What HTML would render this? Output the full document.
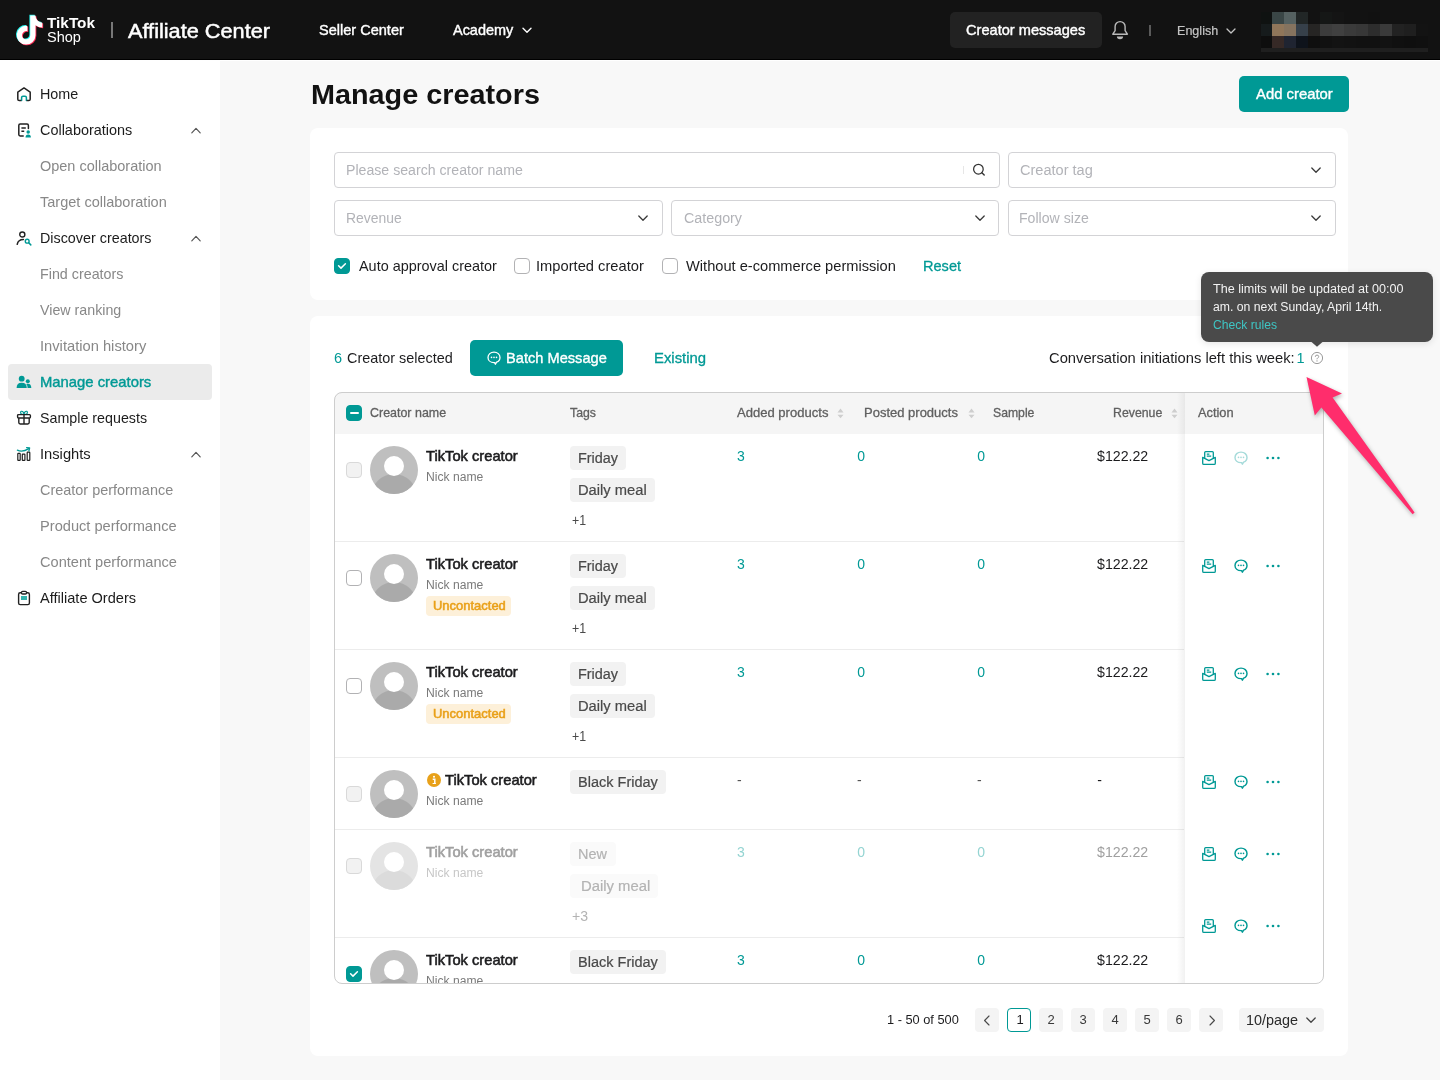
<!DOCTYPE html>
<html lang="en">
<head>
<meta charset="utf-8">
<title>Manage creators</title>
<style>
*{box-sizing:border-box;margin:0;padding:0}
html,body{width:1440px;height:1080px;overflow:hidden}
body{font-family:"Liberation Sans",sans-serif;background:#f8f8f8;color:#161823;position:relative;font-size:14px}
#app{position:absolute;left:0;top:0;width:1440px;height:1080px;overflow:hidden;will-change:transform;background:#f8f8f8}
.a{position:absolute}
.t{position:absolute;white-space:nowrap;line-height:1}
svg{position:absolute;overflow:visible}
#top{position:absolute;left:0;top:0;width:1440px;height:60px;background:#121212;border-bottom:1px solid #000}
#wl{position:absolute;left:0;top:60px;width:1440px;height:1px;background:#fff}
#side{position:absolute;left:0;top:60px;width:220px;height:1020px;background:#fff}
.card{position:absolute;background:#fff;border-radius:8px}
.inp{position:absolute;height:36px;border:1px solid #d3d3d6;border-radius:4px;background:#fff}
.cb{position:absolute;width:16px;height:16px;border:1px solid #b2b2b4;border-radius:4px;background:#fff}
.cb.on{background:#009995;border-color:#009995}
.cb.dis{background:#f2f2f2;border-color:#d9d9d9}
.tag{position:absolute;height:24px;background:#f2f2f2;border-radius:4px}
.av{position:absolute;width:48px;height:48px;border-radius:50%;background:#bfbfbf;overflow:hidden}
.av i{position:absolute;left:13.8px;top:9.5px;width:20.4px;height:20.4px;border-radius:50%;background:#fff}
.av b{position:absolute;left:0.7px;top:28px;width:46.6px;height:46.6px;border-radius:50%;background:#aaa}
.pg{position:absolute;top:1008px;width:24px;height:24px;border-radius:4px;background:#f4f4f4}
.sep{position:absolute;left:335px;width:849px;height:1px;background:#ebebeb}
</style>
</head>
<body>
<div id="app">
<div id="top"></div><div id="wl"></div>
<svg class="a" style="left:0;top:0" width="60" height="59" viewBox="0 0 60 59"><g transform="translate(29.55,29.85) scale(0.935) translate(-29.55,-29.85)"><path d="M35.9,14.4H30.30V35.6a4.4,4.4 0 1 1 -3.10,-4.20v-5.71a10.0,10.0 0 1 0 8.70,9.92V25a12.5,12.5 0 0 0 7.3,2.4v-5.2a7.3,7.8 0 0 1 -7.3,-7.8z" fill="#25f4ee" transform="translate(-0.9,-0.8)"/><path d="M35.9,14.4H30.30V35.6a4.4,4.4 0 1 1 -3.10,-4.20v-5.71a10.0,10.0 0 1 0 8.70,9.92V25a12.5,12.5 0 0 0 7.3,2.4v-5.2a7.3,7.8 0 0 1 -7.3,-7.8z" fill="#fe2c55" transform="translate(0.9,0.8)"/><path d="M35.9,14.4H30.30V35.6a4.4,4.4 0 1 1 -3.10,-4.20v-5.71a10.0,10.0 0 1 0 8.70,9.92V25a12.5,12.5 0 0 0 7.3,2.4v-5.2a7.3,7.8 0 0 1 -7.3,-7.8z" fill="#fff"/></g></svg>
<span class="t" style="left:46.80px;top:15px;font-size:14.5px;color:#fff;line-height:16px;font-weight:700;transform:scaleX(1.0577);transform-origin:0 0;">TikTok</span>
<span class="t" style="left:46.80px;top:29px;font-size:14.3px;color:#fff;line-height:16px;transform:scaleX(1.0168);transform-origin:0 0;">Shop</span>
<div class="a" style="left:111.3px;top:22px;width:1.6px;height:15.5px;background:#777"></div>
<span class="t" style="left:128.20px;top:19px;font-size:21px;color:#fff;line-height:23px;transform:scaleX(1.0338);transform-origin:0 0;-webkit-text-stroke:0.5px #fff;">Affiliate Center</span>
<span class="t" style="left:319.20px;top:22px;font-size:14.5px;color:#fff;line-height:16px;transform:scaleX(1.0024);transform-origin:0 0;-webkit-text-stroke:0.4px #fff;">Seller Center</span>
<span class="t" style="left:453.00px;top:22px;font-size:14.5px;color:#fff;line-height:16px;transform:scaleX(0.9969);transform-origin:0 0;-webkit-text-stroke:0.4px #fff;">Academy</span>
<svg style="left:522px;top:27px" width="10" height="7" viewBox="0 0 10 7"><path d="M1,1.2 L5,5.2 L9,1.2" fill="none" stroke="#fff" stroke-width="1.4" stroke-linecap="round" stroke-linejoin="round"/></svg>
<div class="a" style="left:950px;top:12px;width:152px;height:36px;border-radius:5px;background:#222"></div>
<span class="t" style="left:966.20px;top:22px;font-size:14.5px;color:#fff;line-height:16px;transform:scaleX(1.0067);transform-origin:0 0;-webkit-text-stroke:0.4px #fff;">Creator messages</span>
<svg style="left:1111px;top:21px" width="18" height="19" viewBox="0 0 18 19"><path d="M4.1,5.6 A5,5 0 0 1 14.1,5.6 V9.6 L16.4,13.2 H1.8 L4.1,9.6 Z" fill="none" stroke="#b9b9b9" stroke-width="1.4" stroke-linejoin="round"/><path d="M5.9,15.5 H12.1 A3.1,2.8 0 0 1 5.9,15.5 Z" fill="#b9b9b9"/></svg>
<div class="a" style="left:1149.3px;top:25px;width:1.5px;height:10.5px;background:#5a5a5a"></div>
<span class="t" style="left:1177.43px;top:23px;font-size:13px;color:#c4c4c4;line-height:15px;transform:scaleX(0.9660);transform-origin:0 0;-webkit-text-stroke:0.2px #c4c4c4;">English</span>
<svg style="left:1226px;top:27.5px" width="10" height="7" viewBox="0 0 10 7"><path d="M1,1 L5,5 L9,1" fill="none" stroke="#c4c4c4" stroke-width="1.3" stroke-linecap="round" stroke-linejoin="round"/></svg>
<div class="a" style="left:1261px;top:12px;width:11px;height:12px;background:#0f1211"></div><div class="a" style="left:1272px;top:12px;width:12px;height:12px;background:#3a4646"></div><div class="a" style="left:1284px;top:12px;width:12px;height:12px;background:#556161"></div><div class="a" style="left:1296px;top:12px;width:12px;height:12px;background:#212626"></div><div class="a" style="left:1308px;top:12px;width:12px;height:12px;background:#121212"></div><div class="a" style="left:1320px;top:12px;width:12px;height:12px;background:#151716"></div><div class="a" style="left:1332px;top:12px;width:12px;height:12px;background:#141414"></div><div class="a" style="left:1344px;top:12px;width:12px;height:12px;background:#121212"></div><div class="a" style="left:1356px;top:12px;width:12px;height:12px;background:#121212"></div><div class="a" style="left:1368px;top:12px;width:12px;height:12px;background:#111111"></div><div class="a" style="left:1380px;top:12px;width:12px;height:12px;background:#121212"></div><div class="a" style="left:1392px;top:12px;width:12px;height:12px;background:#121212"></div><div class="a" style="left:1404px;top:12px;width:12px;height:12px;background:#121212"></div><div class="a" style="left:1416px;top:12px;width:12px;height:12px;background:#121212"></div><div class="a" style="left:1261px;top:24px;width:11px;height:12px;background:#161b1c"></div><div class="a" style="left:1272px;top:24px;width:12px;height:12px;background:#90765a"></div><div class="a" style="left:1284px;top:24px;width:12px;height:12px;background:#85735f"></div><div class="a" style="left:1296px;top:24px;width:12px;height:12px;background:#36404a"></div><div class="a" style="left:1308px;top:24px;width:12px;height:12px;background:#262524"></div><div class="a" style="left:1320px;top:24px;width:12px;height:12px;background:#3c3c3c"></div><div class="a" style="left:1332px;top:24px;width:12px;height:12px;background:#404040"></div><div class="a" style="left:1344px;top:24px;width:12px;height:12px;background:#3a3a3a"></div><div class="a" style="left:1356px;top:24px;width:12px;height:12px;background:#373737"></div><div class="a" style="left:1368px;top:24px;width:12px;height:12px;background:#2d2d2d"></div><div class="a" style="left:1380px;top:24px;width:12px;height:12px;background:#3a3a3a"></div><div class="a" style="left:1392px;top:24px;width:12px;height:12px;background:#222222"></div><div class="a" style="left:1404px;top:24px;width:12px;height:12px;background:#1f1f1f"></div><div class="a" style="left:1416px;top:24px;width:12px;height:12px;background:#131313"></div><div class="a" style="left:1261px;top:36px;width:11px;height:12px;background:#0e0e0e"></div><div class="a" style="left:1272px;top:36px;width:12px;height:12px;background:#362926"></div><div class="a" style="left:1284px;top:36px;width:12px;height:12px;background:#1f2431"></div><div class="a" style="left:1296px;top:36px;width:12px;height:12px;background:#0e131b"></div><div class="a" style="left:1308px;top:36px;width:12px;height:12px;background:#0f0f0f"></div><div class="a" style="left:1320px;top:36px;width:12px;height:12px;background:#111111"></div><div class="a" style="left:1332px;top:36px;width:12px;height:12px;background:#131313"></div><div class="a" style="left:1344px;top:36px;width:12px;height:12px;background:#121212"></div><div class="a" style="left:1356px;top:36px;width:12px;height:12px;background:#111111"></div><div class="a" style="left:1368px;top:36px;width:12px;height:12px;background:#111111"></div><div class="a" style="left:1380px;top:36px;width:12px;height:12px;background:#121212"></div><div class="a" style="left:1392px;top:36px;width:12px;height:12px;background:#101010"></div><div class="a" style="left:1404px;top:36px;width:12px;height:12px;background:#0f0f0f"></div><div class="a" style="left:1416px;top:36px;width:12px;height:12px;background:#101010"></div><div class="a" style="left:1261px;top:48px;width:167px;height:4px;background:#1f1f1f"></div>
<div id="side"></div>
<div class="a" style="left:8px;top:364px;width:204px;height:36px;border-radius:4px;background:#ebebeb"></div>
<span class="t" style="left:39.50px;top:86px;font-size:14.5px;color:#1c1c1c;line-height:16px;transform:scaleX(0.9890);transform-origin:0 0;">Home</span>
<span class="t" style="left:39.50px;top:122px;font-size:14.5px;color:#1c1c1c;line-height:16px;transform:scaleX(0.9952);transform-origin:0 0;">Collaborations</span>
<span class="t" style="left:39.50px;top:158px;font-size:14.5px;color:#888888;line-height:16px;transform:scaleX(0.9987);transform-origin:0 0;">Open collaboration</span>
<span class="t" style="left:39.50px;top:194px;font-size:14.5px;color:#888888;line-height:16px;transform:scaleX(1.0017);transform-origin:0 0;">Target collaboration</span>
<span class="t" style="left:39.50px;top:230px;font-size:14.5px;color:#1c1c1c;line-height:16px;transform:scaleX(0.9887);transform-origin:0 0;">Discover creators</span>
<span class="t" style="left:39.50px;top:266px;font-size:14.5px;color:#888888;line-height:16px;transform:scaleX(0.9860);transform-origin:0 0;">Find creators</span>
<span class="t" style="left:39.50px;top:302px;font-size:14.5px;color:#888888;line-height:16px;transform:scaleX(0.9820);transform-origin:0 0;">View ranking</span>
<span class="t" style="left:39.50px;top:338px;font-size:14.5px;color:#888888;line-height:16px;transform:scaleX(1.0142);transform-origin:0 0;">Invitation history</span>
<span class="t" style="left:39.50px;top:374px;font-size:14.5px;color:#009995;line-height:16px;transform:scaleX(1.0227);transform-origin:0 0;-webkit-text-stroke:0.4px #009995;">Manage creators</span>
<span class="t" style="left:39.50px;top:410px;font-size:14.5px;color:#1c1c1c;line-height:16px;transform:scaleX(0.9838);transform-origin:0 0;">Sample requests</span>
<span class="t" style="left:39.50px;top:446px;font-size:14.5px;color:#1c1c1c;line-height:16px;transform:scaleX(1.0139);transform-origin:0 0;">Insights</span>
<span class="t" style="left:39.50px;top:482px;font-size:14.5px;color:#888888;line-height:16px;transform:scaleX(0.9954);transform-origin:0 0;">Creator performance</span>
<span class="t" style="left:39.50px;top:518px;font-size:14.5px;color:#888888;line-height:16px;transform:scaleX(1.0087);transform-origin:0 0;">Product performance</span>
<span class="t" style="left:39.50px;top:554px;font-size:14.5px;color:#888888;line-height:16px;transform:scaleX(1.0055);transform-origin:0 0;">Content performance</span>
<span class="t" style="left:39.50px;top:590px;font-size:14.5px;color:#1c1c1c;line-height:16px;transform:scaleX(1.0044);transform-origin:0 0;">Affiliate Orders</span>
<svg style="left:191px;top:127.19999999999999px" width="10" height="7" viewBox="0 0 10 7"><path d="M0.8,5.8 L5,1.4 L9.2,5.8" fill="none" stroke="#555" stroke-width="1.2" stroke-linecap="round" stroke-linejoin="round"/></svg>
<svg style="left:191px;top:235.2px" width="10" height="7" viewBox="0 0 10 7"><path d="M0.8,5.8 L5,1.4 L9.2,5.8" fill="none" stroke="#555" stroke-width="1.2" stroke-linecap="round" stroke-linejoin="round"/></svg>
<svg style="left:191px;top:451.2px" width="10" height="7" viewBox="0 0 10 7"><path d="M0.8,5.8 L5,1.4 L9.2,5.8" fill="none" stroke="#555" stroke-width="1.2" stroke-linecap="round" stroke-linejoin="round"/></svg>
<svg style="left:16px;top:86px" width="16" height="16" viewBox="0 0 16 16"><path d="M5.4,14.6 H3.2 Q1.8,14.6 1.8,13.2 V6.2 L8,1.9 L14.2,6.2 V13.2 Q14.2,14.6 12.8,14.6 H10.6" fill="none" stroke="#222" stroke-width="1.5" stroke-linejoin="round" stroke-linecap="round"/><path d="M5.6,14.8 V11.6 Q5.6,10.2 7,10.2 H9 Q10.4,10.2 10.4,11.6 V14.8" fill="none" stroke="#009995" stroke-width="1.5"/></svg>
<svg style="left:16px;top:122px" width="16" height="16" viewBox="0 0 16 16"><path d="M7.2,14 H4.2 Q2.8,14 2.8,12.6 V3.4 Q2.8,2 4.2,2 H11 Q12.4,2 12.4,3.4 V6.6" fill="none" stroke="#222" stroke-width="1.5" stroke-linecap="round"/><path d="M5.4,6 H9.8 M5.4,9.2 H8.2" stroke="#222" stroke-width="1.5"/><circle cx="12.2" cy="9.9" r="1.75" fill="#009995"/><path d="M9.5,15.4 Q9.5,12.4 12.2,12.4 Q14.9,12.4 14.9,15.4 Z" fill="#009995"/></svg>
<svg style="left:16px;top:230px" width="16" height="16" viewBox="0 0 16 16"><circle cx="6.3" cy="4.5" r="2.55" fill="none" stroke="#222" stroke-width="1.4"/><path d="M1.2,14.3 Q2.2,9.7 7.4,9.6" fill="none" stroke="#222" stroke-width="1.5" stroke-linecap="round"/><circle cx="11.2" cy="11.2" r="1.9" fill="none" stroke="#009995" stroke-width="1.4"/><path d="M12.7,12.8 L14.8,14.9" stroke="#009995" stroke-width="1.5" stroke-linecap="round"/></svg>
<svg style="left:16px;top:374px" width="16" height="16" viewBox="0 0 16 16"><circle cx="5.7" cy="4.7" r="2.9" fill="#009995"/><path d="M0.6,14 Q0.6,8.8 5.7,8.8 Q10.8,8.8 10.8,14 Z" fill="#009995"/><circle cx="11.8" cy="7.2" r="2" fill="#009995"/><path d="M11.6,14 Q11.6,11.2 10.2,10 Q10.9,9.7 11.8,9.7 Q15.3,9.7 15.3,14 Z" fill="#009995"/></svg>
<svg style="left:16px;top:410px" width="16" height="16" viewBox="0 0 16 16"><path d="M8,4.3 Q4.4,4.6 4.6,2.4 Q4.9,0.6 6.6,1.6 Q7.8,2.4 8,4.3 Q8.2,2.4 9.4,1.6 Q11.1,0.6 11.4,2.4 Q11.6,4.6 8,4.3" fill="none" stroke="#009995" stroke-width="1.2"/><rect x="1.6" y="4.6" width="12.8" height="3.4" rx="0.9" fill="none" stroke="#222" stroke-width="1.4"/><path d="M2.8,8 V12.6 Q2.8,14 4.2,14 H11.8 Q13.2,14 13.2,12.6 V8 M8,4.8 V14" fill="none" stroke="#222" stroke-width="1.4"/></svg>
<svg style="left:16px;top:446px" width="16" height="16" viewBox="0 0 16 16"><rect x="1.8" y="7.4" width="2.4" height="7" rx="0.5" fill="none" stroke="#222" stroke-width="1.2"/><rect x="6.3" y="8.2" width="2.6" height="6.2" rx="0.5" fill="none" stroke="#222" stroke-width="1.2"/><rect x="11.2" y="6.2" width="2.6" height="8.2" rx="0.5" fill="none" stroke="#222" stroke-width="1.2"/><path d="M1.4,4.2 Q6.5,6.6 12.8,2.6" fill="none" stroke="#009995" stroke-width="1.3" stroke-linecap="round"/><path d="M10.6,1.6 L13.6,2 L12.9,4.9" fill="none" stroke="#009995" stroke-width="1.3" stroke-linecap="round" stroke-linejoin="round"/></svg>
<svg style="left:16px;top:590px" width="16" height="16" viewBox="0 0 16 16"><rect x="2.6" y="2.8" width="10.8" height="11.8" rx="1.6" fill="none" stroke="#222" stroke-width="1.4"/><rect x="5.4" y="1.4" width="5.2" height="2.6" rx="1.3" fill="#fff" stroke="#222" stroke-width="1.3"/><rect x="5" y="6" width="6" height="4" fill="#33b3ad"/></svg>
<span class="t" style="left:310.96px;top:79px;font-size:27.6px;color:#121212;line-height:31px;font-weight:700;transform:scaleX(1.0438);transform-origin:0 0;">Manage creators</span>
<div class="a" style="left:1239px;top:76px;width:110px;height:36px;border-radius:5px;background:#009995"></div>
<span class="t" style="left:1255.50px;top:86px;font-size:14.5px;color:#fff;line-height:16px;transform:scaleX(1.0249);transform-origin:0 0;-webkit-text-stroke:0.35px #fff;">Add creator</span>
<div class="card" style="left:310.4px;top:127.8px;width:1038.1px;height:172.4px"></div>
<div class="inp" style="left:334px;top:152px;width:665.6px"></div>
<span class="t" style="left:345.69px;top:162px;font-size:14px;color:#b2b3b8;line-height:16px;transform:scaleX(1.0097);transform-origin:0 0;">Please search creator name</span>
<div class="a" style="left:963px;top:166px;width:1px;height:8px;background:#e6e6e6"></div>
<svg style="left:972px;top:163px" width="14" height="14" viewBox="0 0 14 14"><circle cx="6.4" cy="6.2" r="4.8" fill="none" stroke="#333" stroke-width="1.25"/><path d="M9.9,9.7 L12.2,12" stroke="#333" stroke-width="1.35" stroke-linecap="round"/></svg>
<div class="inp" style="left:1008px;top:152px;width:328px"></div>
<span class="t" style="left:1020.00px;top:162px;font-size:14px;color:#b2b3b8;line-height:16px;transform:scaleX(1.0397);transform-origin:0 0;">Creator tag</span>
<svg style="left:1311.2px;top:166.5px" width="10" height="7" viewBox="0 0 10 7"><path d="M0.8,1 L5,5.2 L9.2,1" fill="none" stroke="#3a3a3a" stroke-width="1.3" stroke-linecap="round" stroke-linejoin="round"/></svg>
<div class="inp" style="left:334px;top:200px;width:329px"></div>
<span class="t" style="left:345.70px;top:210px;font-size:14px;color:#b2b3b8;line-height:16px;transform:scaleX(0.9954);transform-origin:0 0;">Revenue</span>
<svg style="left:638px;top:214.5px" width="10" height="7" viewBox="0 0 10 7"><path d="M0.8,1 L5,5.2 L9.2,1" fill="none" stroke="#3a3a3a" stroke-width="1.3" stroke-linecap="round" stroke-linejoin="round"/></svg>
<div class="inp" style="left:671px;top:200px;width:328px"></div>
<span class="t" style="left:683.70px;top:210px;font-size:14px;color:#b2b3b8;line-height:16px;transform:scaleX(1.0210);transform-origin:0 0;">Category</span>
<svg style="left:975px;top:214.5px" width="10" height="7" viewBox="0 0 10 7"><path d="M0.8,1 L5,5.2 L9.2,1" fill="none" stroke="#3a3a3a" stroke-width="1.3" stroke-linecap="round" stroke-linejoin="round"/></svg>
<div class="inp" style="left:1008px;top:200px;width:328px"></div>
<span class="t" style="left:1018.99px;top:210px;font-size:14px;color:#b2b3b8;line-height:16px;transform:scaleX(1.0080);transform-origin:0 0;">Follow size</span>
<svg style="left:1311.2px;top:214.5px" width="10" height="7" viewBox="0 0 10 7"><path d="M0.8,1 L5,5.2 L9.2,1" fill="none" stroke="#3a3a3a" stroke-width="1.3" stroke-linecap="round" stroke-linejoin="round"/></svg>
<div class="cb on" style="left:334px;top:258px"><svg style="left:2px;top:3px" width="10" height="8" viewBox="0 0 10 8"><path d="M1.6,3.8 L4,6.1 L8.4,1.7" fill="none" stroke="#fff" stroke-width="1.5" stroke-linecap="round" stroke-linejoin="round"/></svg></div>
<span class="t" style="left:358.70px;top:258px;font-size:14.5px;color:#1c1c1e;line-height:16px;transform:scaleX(0.9942);transform-origin:0 0;">Auto approval creator</span>
<div class="cb" style="left:514px;top:258px"></div>
<span class="t" style="left:536.49px;top:258px;font-size:14.5px;color:#1c1c1e;line-height:16px;transform:scaleX(1.0137);transform-origin:0 0;">Imported creator</span>
<div class="cb" style="left:662px;top:258px"></div>
<span class="t" style="left:685.70px;top:258px;font-size:14.5px;color:#1c1c1e;line-height:16px;transform:scaleX(1.0095);transform-origin:0 0;">Without e-commerce permission</span>
<span class="t" style="left:922.70px;top:258px;font-size:14.5px;color:#009995;line-height:16px;transform:scaleX(1.0041);transform-origin:0 0;-webkit-text-stroke:0.3px #009995;">Reset</span>
<div class="card" style="left:310.4px;top:315.8px;width:1038.1px;height:739.9px"></div>
<span class="t" style="left:334.00px;top:350px;font-size:14.5px;color:#009995;line-height:16px;">6</span>
<span class="t" style="left:347.10px;top:350px;font-size:14.5px;color:#1c1c1e;line-height:16px;transform:scaleX(0.9932);transform-origin:0 0;">Creator selected</span>
<div class="a" style="left:470px;top:340px;width:153px;height:36px;border-radius:5px;background:#009995"></div>
<svg style="left:487px;top:351px;opacity:1" width="14" height="14" viewBox="0 0 14 14"><path d="M7,1.1 C3.6,1.1 1,3.4 1,6.4 C1,9.4 3.6,11.6 7,11.6 L7.6,11.6 L8.4,13.2 L9.6,11.2 C11.6,10.4 13,8.6 13,6.4 C13,3.4 10.4,1.1 7,1.1 Z" fill="none" stroke="#fff" stroke-width="1.3" stroke-linejoin="round"/><circle cx="4.5" cy="6.4" r="0.8" fill="#fff"/><circle cx="7" cy="6.4" r="0.8" fill="#fff"/><circle cx="9.5" cy="6.4" r="0.8" fill="#fff"/></svg>
<span class="t" style="left:505.59px;top:350px;font-size:14.5px;color:#fff;line-height:16px;transform:scaleX(1.0083);transform-origin:0 0;-webkit-text-stroke:0.35px #fff;">Batch Message</span>
<span class="t" style="left:654.27px;top:350px;font-size:14.5px;color:#009995;line-height:16px;transform:scaleX(1.0260);transform-origin:0 0;-webkit-text-stroke:0.3px #009995;">Existing</span>
<span class="t" style="left:1048.60px;top:350px;font-size:14.5px;color:#1c1c1e;line-height:16px;transform:scaleX(1.0160);transform-origin:0 0;">Conversation initiations left this week:</span>
<span class="t" style="left:1296.40px;top:350px;font-size:14.5px;color:#009995;line-height:16px;">1</span>
<svg style="left:1310px;top:351px" width="14" height="14" viewBox="0 0 14 14"><circle cx="7" cy="7" r="5.6" fill="none" stroke="#9a9a9a" stroke-width="1"/><path d="M5.3,5.8 Q5.3,4.1 7,4.1 Q8.7,4.1 8.7,5.6 Q8.7,6.6 7.6,7.1 Q7,7.4 7,8.3" fill="none" stroke="#9a9a9a" stroke-width="1"/><circle cx="7" cy="9.9" r="0.65" fill="#9a9a9a"/></svg>
<div class="a" style="left:334px;top:392px;width:990px;height:592px;border-radius:8px;overflow:hidden;background:#fff">
<div class="a" style="left:0;top:0;width:990px;height:42px;background:#f5f5f5"></div>
<div class="cb on" style="left:12px;top:13px"><div class="a" style="left:2.5px;top:6px;width:9px;height:2px;border-radius:1px;background:#fff"></div></div>
<span class="t" style="left:36.20px;top:13px;font-size:12.8px;color:#606060;line-height:15px;transform:scaleX(0.9729);transform-origin:0 0;-webkit-text-stroke:0.3px #606060;">Creator name</span>
<span class="t" style="left:236.20px;top:13px;font-size:12.8px;color:#606060;line-height:15px;transform:scaleX(0.9612);transform-origin:0 0;-webkit-text-stroke:0.3px #606060;">Tags</span>
<span class="t" style="left:403.00px;top:13px;font-size:12.8px;color:#606060;line-height:15px;transform:scaleX(1.0197);transform-origin:0 0;-webkit-text-stroke:0.3px #606060;">Added products</span>
<span class="t" style="left:530.48px;top:13px;font-size:12.8px;color:#606060;line-height:15px;transform:scaleX(1.0156);transform-origin:0 0;-webkit-text-stroke:0.3px #606060;">Posted products</span>
<span class="t" style="left:659.20px;top:13px;font-size:12.8px;color:#606060;line-height:15px;transform:scaleX(0.9544);transform-origin:0 0;-webkit-text-stroke:0.3px #606060;">Sample</span>
<span class="t" style="left:778.54px;top:13px;font-size:12.8px;color:#606060;line-height:15px;transform:scaleX(0.9619);transform-origin:0 0;-webkit-text-stroke:0.3px #606060;">Revenue</span>
<svg style="left:502.6px;top:15.5px" width="7" height="12" viewBox="0 0 7 12"><path d="M3.5,0.6 L6.5,4.4 H0.5 Z M3.5,10.2 L6.5,6.7 H0.5 Z" fill="#cecece"/></svg>
<svg style="left:633.6px;top:15.5px" width="7" height="12" viewBox="0 0 7 12"><path d="M3.5,0.6 L6.5,4.4 H0.5 Z M3.5,10.2 L6.5,6.7 H0.5 Z" fill="#cecece"/></svg>
<svg style="left:836.5999999999999px;top:15.5px" width="7" height="12" viewBox="0 0 7 12"><path d="M3.5,0.6 L6.5,4.4 H0.5 Z M3.5,10.2 L6.5,6.7 H0.5 Z" fill="#cecece"/></svg>
<div class="a" style="left:0;top:149px;width:850px;height:1px;background:#ececec"></div>
<div class="cb dis" style="left:12px;top:70px"></div>
<div class="av" style="left:36px;top:54px;"><b></b><i></i></div>
<span class="t" style="left:92.30px;top:56px;font-size:14.2px;color:#1c1c1e;line-height:16px;transform:scaleX(1.0356);transform-origin:0 0;-webkit-text-stroke:0.55px #1c1c1e;">TikTok creator</span>
<span class="t" style="left:92.30px;top:78px;font-size:12px;color:#7a7a7a;line-height:14px;transform:scaleX(1.0104);transform-origin:0 0;">Nick name</span>
<div class="tag" style="left:236px;top:54px;width:56px;background:#f2f2f2"></div>
<span class="t" style="left:243.57px;top:58px;font-size:14px;color:#4a4a4a;line-height:16px;transform:scaleX(1.0291);transform-origin:0 0;-webkit-text-stroke:0.2px #4a4a4a;">Friday</span>
<div class="tag" style="left:236px;top:86px;width:85px;background:#f2f2f2"></div>
<span class="t" style="left:243.55px;top:90px;font-size:14px;color:#4a4a4a;line-height:16px;transform:scaleX(1.0507);transform-origin:0 0;-webkit-text-stroke:0.2px #4a4a4a;">Daily meal</span>
<span class="t" style="left:237.60px;top:120px;font-size:14px;color:#4a4a4a;line-height:16px;transform:scaleX(0.8840);transform-origin:0 0;">+1</span>
<span class="t" style="left:403.00px;top:56px;font-size:14px;color:#009995;line-height:16px;">3</span>
<span class="t" style="left:523.30px;top:56px;font-size:14px;color:#009995;line-height:16px;">0</span>
<span class="t" style="left:643.30px;top:56px;font-size:14px;color:#009995;line-height:16px;">0</span>
<span class="t" style="left:763.30px;top:56px;font-size:14.5px;color:#1c1c1e;line-height:16px;transform:scaleX(0.9780);transform-origin:0 0;">$122.22</span>
<div class="a" style="left:0;top:257px;width:850px;height:1px;background:#ececec"></div>
<div class="cb" style="left:12px;top:178px"></div>
<div class="av" style="left:36px;top:162px;"><b></b><i></i></div>
<span class="t" style="left:92.30px;top:164px;font-size:14.2px;color:#1c1c1e;line-height:16px;transform:scaleX(1.0356);transform-origin:0 0;-webkit-text-stroke:0.55px #1c1c1e;">TikTok creator</span>
<span class="t" style="left:92.30px;top:186px;font-size:12px;color:#7a7a7a;line-height:14px;transform:scaleX(1.0104);transform-origin:0 0;">Nick name</span>
<div class="a" style="left:92px;top:204px;width:85px;height:20px;border-radius:4px;background:#fdf0d9"></div>
<span class="t" style="left:98.50px;top:207px;font-size:12.2px;color:#e9a019;line-height:14px;transform:scaleX(1.0643);transform-origin:0 0;-webkit-text-stroke:0.5px #e9a019;">Uncontacted</span>
<div class="tag" style="left:236px;top:162px;width:56px;background:#f2f2f2"></div>
<span class="t" style="left:243.57px;top:166px;font-size:14px;color:#4a4a4a;line-height:16px;transform:scaleX(1.0291);transform-origin:0 0;-webkit-text-stroke:0.2px #4a4a4a;">Friday</span>
<div class="tag" style="left:236px;top:194px;width:85px;background:#f2f2f2"></div>
<span class="t" style="left:243.55px;top:198px;font-size:14px;color:#4a4a4a;line-height:16px;transform:scaleX(1.0507);transform-origin:0 0;-webkit-text-stroke:0.2px #4a4a4a;">Daily meal</span>
<span class="t" style="left:237.60px;top:228px;font-size:14px;color:#4a4a4a;line-height:16px;transform:scaleX(0.8840);transform-origin:0 0;">+1</span>
<span class="t" style="left:403.00px;top:164px;font-size:14px;color:#009995;line-height:16px;">3</span>
<span class="t" style="left:523.30px;top:164px;font-size:14px;color:#009995;line-height:16px;">0</span>
<span class="t" style="left:643.30px;top:164px;font-size:14px;color:#009995;line-height:16px;">0</span>
<span class="t" style="left:763.30px;top:164px;font-size:14.5px;color:#1c1c1e;line-height:16px;transform:scaleX(0.9780);transform-origin:0 0;">$122.22</span>
<div class="a" style="left:0;top:365px;width:850px;height:1px;background:#ececec"></div>
<div class="cb" style="left:12px;top:286px"></div>
<div class="av" style="left:36px;top:270px;"><b></b><i></i></div>
<span class="t" style="left:92.30px;top:272px;font-size:14.2px;color:#1c1c1e;line-height:16px;transform:scaleX(1.0356);transform-origin:0 0;-webkit-text-stroke:0.55px #1c1c1e;">TikTok creator</span>
<span class="t" style="left:92.30px;top:294px;font-size:12px;color:#7a7a7a;line-height:14px;transform:scaleX(1.0104);transform-origin:0 0;">Nick name</span>
<div class="a" style="left:92px;top:312px;width:85px;height:20px;border-radius:4px;background:#fdf0d9"></div>
<span class="t" style="left:98.50px;top:315px;font-size:12.2px;color:#e9a019;line-height:14px;transform:scaleX(1.0643);transform-origin:0 0;-webkit-text-stroke:0.5px #e9a019;">Uncontacted</span>
<div class="tag" style="left:236px;top:270px;width:56px;background:#f2f2f2"></div>
<span class="t" style="left:243.57px;top:274px;font-size:14px;color:#4a4a4a;line-height:16px;transform:scaleX(1.0291);transform-origin:0 0;-webkit-text-stroke:0.2px #4a4a4a;">Friday</span>
<div class="tag" style="left:236px;top:302px;width:85px;background:#f2f2f2"></div>
<span class="t" style="left:243.55px;top:306px;font-size:14px;color:#4a4a4a;line-height:16px;transform:scaleX(1.0507);transform-origin:0 0;-webkit-text-stroke:0.2px #4a4a4a;">Daily meal</span>
<span class="t" style="left:237.60px;top:336px;font-size:14px;color:#4a4a4a;line-height:16px;transform:scaleX(0.8840);transform-origin:0 0;">+1</span>
<span class="t" style="left:403.00px;top:272px;font-size:14px;color:#009995;line-height:16px;">3</span>
<span class="t" style="left:523.30px;top:272px;font-size:14px;color:#009995;line-height:16px;">0</span>
<span class="t" style="left:643.30px;top:272px;font-size:14px;color:#009995;line-height:16px;">0</span>
<span class="t" style="left:763.30px;top:272px;font-size:14.5px;color:#1c1c1e;line-height:16px;transform:scaleX(0.9780);transform-origin:0 0;">$122.22</span>
<div class="a" style="left:0;top:437px;width:850px;height:1px;background:#ececec"></div>
<div class="cb dis" style="left:12px;top:394px"></div>
<div class="av" style="left:36px;top:378px;"><b></b><i></i></div>
<svg style="left:92.69999999999999px;top:381.20000000000005px" width="14" height="14" viewBox="0 0 14 14"><circle cx="7" cy="7" r="7" fill="#e8a11a"/><circle cx="7" cy="3.8" r="1.05" fill="#fff"/><path d="M5.7,6.3 H7.8 V10.8" stroke="#fff" stroke-width="1.5" fill="none"/><path d="M5.6,10.5 H8.9" stroke="#fff" stroke-width="1.1" fill="none"/></svg>
<span class="t" style="left:111.00px;top:380px;font-size:14.2px;color:#1c1c1e;line-height:16px;transform:scaleX(1.0356);transform-origin:0 0;-webkit-text-stroke:0.55px #1c1c1e;">TikTok creator</span>
<span class="t" style="left:92.30px;top:402px;font-size:12px;color:#7a7a7a;line-height:14px;transform:scaleX(1.0104);transform-origin:0 0;">Nick name</span>
<div class="tag" style="left:236px;top:378px;width:96px;background:#f2f2f2"></div>
<span class="t" style="left:243.56px;top:382px;font-size:14px;color:#4a4a4a;line-height:16px;transform:scaleX(1.0366);transform-origin:0 0;-webkit-text-stroke:0.2px #4a4a4a;">Black Friday</span>
<span class="t" style="left:403.00px;top:380px;font-size:14px;color:#555;line-height:16px;">-</span>
<span class="t" style="left:523.00px;top:380px;font-size:14px;color:#555;line-height:16px;">-</span>
<span class="t" style="left:643.00px;top:380px;font-size:14px;color:#555;line-height:16px;">-</span>
<span class="t" style="left:763.30px;top:380px;font-size:14px;color:#1c1c1e;line-height:16px;">-</span>
<div class="a" style="left:0;top:545px;width:850px;height:1px;background:#ececec"></div>
<div class="cb dis" style="left:12px;top:466px"></div>
<div class="av" style="left:36px;top:450px;background:#e4e4e4"><b style="background:#dbdbdb"></b><i></i></div>
<span class="t" style="left:92.30px;top:452px;font-size:14.2px;color:#a0a0a0;line-height:16px;transform:scaleX(1.0356);transform-origin:0 0;-webkit-text-stroke:0.55px #a0a0a0;">TikTok creator</span>
<span class="t" style="left:92.30px;top:474px;font-size:12px;color:#c7c7c7;line-height:14px;transform:scaleX(1.0104);transform-origin:0 0;">Nick name</span>
<div class="tag" style="left:236px;top:450px;width:46px;background:#fafafa"></div>
<span class="t" style="left:243.57px;top:454px;font-size:14px;color:#b3b3b3;line-height:16px;transform:scaleX(1.0324);transform-origin:0 0;-webkit-text-stroke:0.2px #b3b3b3;">New</span>
<div class="tag" style="left:236px;top:482px;width:88px;background:#fafafa"></div>
<span class="t" style="left:246.94px;top:486px;font-size:14px;color:#b3b3b3;line-height:16px;transform:scaleX(1.0585);transform-origin:0 0;-webkit-text-stroke:0.2px #b3b3b3;">Daily meal</span>
<span class="t" style="left:237.70px;top:516px;font-size:14px;color:#b3b3b3;line-height:16px;transform:scaleX(1.0077);transform-origin:0 0;">+3</span>
<span class="t" style="left:403.00px;top:452px;font-size:14px;color:#94d4d2;line-height:16px;">3</span>
<span class="t" style="left:523.30px;top:452px;font-size:14px;color:#94d4d2;line-height:16px;">0</span>
<span class="t" style="left:643.30px;top:452px;font-size:14px;color:#94d4d2;line-height:16px;">0</span>
<span class="t" style="left:763.30px;top:452px;font-size:14.5px;color:#a0a0a0;line-height:16px;transform:scaleX(0.9780);transform-origin:0 0;">$122.22</span>
<div class="cb on" style="left:12px;top:574px"><svg style="left:2px;top:3px" width="10" height="8" viewBox="0 0 10 8"><path d="M1.6,3.8 L4,6.1 L8.4,1.7" fill="none" stroke="#fff" stroke-width="1.5" stroke-linecap="round" stroke-linejoin="round"/></svg></div>
<div class="av" style="left:36px;top:558px;"><b></b><i></i></div>
<span class="t" style="left:92.30px;top:560px;font-size:14.2px;color:#1c1c1e;line-height:16px;transform:scaleX(1.0356);transform-origin:0 0;-webkit-text-stroke:0.55px #1c1c1e;">TikTok creator</span>
<span class="t" style="left:92.30px;top:582px;font-size:12px;color:#7a7a7a;line-height:14px;transform:scaleX(1.0104);transform-origin:0 0;">Nick name</span>
<div class="tag" style="left:236px;top:558px;width:96px;background:#f2f2f2"></div>
<span class="t" style="left:243.56px;top:562px;font-size:14px;color:#4a4a4a;line-height:16px;transform:scaleX(1.0366);transform-origin:0 0;-webkit-text-stroke:0.2px #4a4a4a;">Black Friday</span>
<span class="t" style="left:403.00px;top:560px;font-size:14px;color:#009995;line-height:16px;">3</span>
<span class="t" style="left:523.30px;top:560px;font-size:14px;color:#009995;line-height:16px;">0</span>
<span class="t" style="left:643.30px;top:560px;font-size:14px;color:#009995;line-height:16px;">0</span>
<span class="t" style="left:763.30px;top:560px;font-size:14.5px;color:#1c1c1e;line-height:16px;transform:scaleX(0.9780);transform-origin:0 0;">$122.22</span>
<div class="a" style="left:843px;top:0;width:8px;height:592px;background:linear-gradient(to right,rgba(0,0,0,0),rgba(0,0,0,0.055))"></div>
<div class="a" style="left:851px;top:0;width:140px;height:592px;background:#fff"></div>
<div class="a" style="left:851px;top:0;width:140px;height:42px;background:#f5f5f5"></div>
<span class="t" style="left:863.50px;top:13px;font-size:12.8px;color:#606060;line-height:15px;transform:scaleX(1.0014);transform-origin:0 0;-webkit-text-stroke:0.3px #606060;">Action</span>
<svg style="left:867px;top:58px" width="16" height="16" viewBox="0 0 16 16"><path d="M1.7,7.4 V13.2 Q1.7,14.4 2.9,14.4 H13.1 Q14.3,14.4 14.3,13.2 V7.4 L8,10.6 Z" fill="none" stroke="#009995" stroke-width="1.3" stroke-linejoin="round"/><path d="M3.7,8 V2.6 Q3.7,1.6 4.7,1.6 H11.3 Q12.3,1.6 12.3,2.6 V8" fill="none" stroke="#009995" stroke-width="1.3"/><path d="M5.8,4.2 H8.4 M5.8,6.2 H10.2" stroke="#009995" stroke-width="1.2"/></svg>
<svg style="left:900px;top:59px" width="14" height="14" viewBox="0 0 14 14"><path d="M7,1.1 C3.6,1.1 1,3.4 1,6.4 C1,9.4 3.6,11.6 7,11.6 L7.6,11.6 L8.4,13.2 L9.6,11.2 C11.6,10.4 13,8.6 13,6.4 C13,3.4 10.4,1.1 7,1.1 Z" fill="none" stroke="#a6dbda" stroke-width="1.45" stroke-linejoin="round"/><circle cx="4.5" cy="6.4" r="0.8" fill="#a6dbda"/><circle cx="7" cy="6.4" r="0.8" fill="#a6dbda"/><circle cx="9.5" cy="6.4" r="0.8" fill="#a6dbda"/></svg>
<svg style="left:932px;top:64px" width="14" height="4" viewBox="0 0 14 4"><circle cx="1.6" cy="2" r="1.3" fill="#009995"/><circle cx="7" cy="2" r="1.3" fill="#009995"/><circle cx="12.4" cy="2" r="1.3" fill="#009995"/></svg>
<svg style="left:867px;top:166px" width="16" height="16" viewBox="0 0 16 16"><path d="M1.7,7.4 V13.2 Q1.7,14.4 2.9,14.4 H13.1 Q14.3,14.4 14.3,13.2 V7.4 L8,10.6 Z" fill="none" stroke="#009995" stroke-width="1.3" stroke-linejoin="round"/><path d="M3.7,8 V2.6 Q3.7,1.6 4.7,1.6 H11.3 Q12.3,1.6 12.3,2.6 V8" fill="none" stroke="#009995" stroke-width="1.3"/><path d="M5.8,4.2 H8.4 M5.8,6.2 H10.2" stroke="#009995" stroke-width="1.2"/></svg>
<svg style="left:900px;top:167px" width="14" height="14" viewBox="0 0 14 14"><path d="M7,1.1 C3.6,1.1 1,3.4 1,6.4 C1,9.4 3.6,11.6 7,11.6 L7.6,11.6 L8.4,13.2 L9.6,11.2 C11.6,10.4 13,8.6 13,6.4 C13,3.4 10.4,1.1 7,1.1 Z" fill="none" stroke="#009995" stroke-width="1.45" stroke-linejoin="round"/><circle cx="4.5" cy="6.4" r="0.8" fill="#009995"/><circle cx="7" cy="6.4" r="0.8" fill="#009995"/><circle cx="9.5" cy="6.4" r="0.8" fill="#009995"/></svg>
<svg style="left:932px;top:172px" width="14" height="4" viewBox="0 0 14 4"><circle cx="1.6" cy="2" r="1.3" fill="#009995"/><circle cx="7" cy="2" r="1.3" fill="#009995"/><circle cx="12.4" cy="2" r="1.3" fill="#009995"/></svg>
<svg style="left:867px;top:274px" width="16" height="16" viewBox="0 0 16 16"><path d="M1.7,7.4 V13.2 Q1.7,14.4 2.9,14.4 H13.1 Q14.3,14.4 14.3,13.2 V7.4 L8,10.6 Z" fill="none" stroke="#009995" stroke-width="1.3" stroke-linejoin="round"/><path d="M3.7,8 V2.6 Q3.7,1.6 4.7,1.6 H11.3 Q12.3,1.6 12.3,2.6 V8" fill="none" stroke="#009995" stroke-width="1.3"/><path d="M5.8,4.2 H8.4 M5.8,6.2 H10.2" stroke="#009995" stroke-width="1.2"/></svg>
<svg style="left:900px;top:275px" width="14" height="14" viewBox="0 0 14 14"><path d="M7,1.1 C3.6,1.1 1,3.4 1,6.4 C1,9.4 3.6,11.6 7,11.6 L7.6,11.6 L8.4,13.2 L9.6,11.2 C11.6,10.4 13,8.6 13,6.4 C13,3.4 10.4,1.1 7,1.1 Z" fill="none" stroke="#009995" stroke-width="1.45" stroke-linejoin="round"/><circle cx="4.5" cy="6.4" r="0.8" fill="#009995"/><circle cx="7" cy="6.4" r="0.8" fill="#009995"/><circle cx="9.5" cy="6.4" r="0.8" fill="#009995"/></svg>
<svg style="left:932px;top:280px" width="14" height="4" viewBox="0 0 14 4"><circle cx="1.6" cy="2" r="1.3" fill="#009995"/><circle cx="7" cy="2" r="1.3" fill="#009995"/><circle cx="12.4" cy="2" r="1.3" fill="#009995"/></svg>
<svg style="left:867px;top:382px" width="16" height="16" viewBox="0 0 16 16"><path d="M1.7,7.4 V13.2 Q1.7,14.4 2.9,14.4 H13.1 Q14.3,14.4 14.3,13.2 V7.4 L8,10.6 Z" fill="none" stroke="#009995" stroke-width="1.3" stroke-linejoin="round"/><path d="M3.7,8 V2.6 Q3.7,1.6 4.7,1.6 H11.3 Q12.3,1.6 12.3,2.6 V8" fill="none" stroke="#009995" stroke-width="1.3"/><path d="M5.8,4.2 H8.4 M5.8,6.2 H10.2" stroke="#009995" stroke-width="1.2"/></svg>
<svg style="left:900px;top:383px" width="14" height="14" viewBox="0 0 14 14"><path d="M7,1.1 C3.6,1.1 1,3.4 1,6.4 C1,9.4 3.6,11.6 7,11.6 L7.6,11.6 L8.4,13.2 L9.6,11.2 C11.6,10.4 13,8.6 13,6.4 C13,3.4 10.4,1.1 7,1.1 Z" fill="none" stroke="#009995" stroke-width="1.45" stroke-linejoin="round"/><circle cx="4.5" cy="6.4" r="0.8" fill="#009995"/><circle cx="7" cy="6.4" r="0.8" fill="#009995"/><circle cx="9.5" cy="6.4" r="0.8" fill="#009995"/></svg>
<svg style="left:932px;top:388px" width="14" height="4" viewBox="0 0 14 4"><circle cx="1.6" cy="2" r="1.3" fill="#009995"/><circle cx="7" cy="2" r="1.3" fill="#009995"/><circle cx="12.4" cy="2" r="1.3" fill="#009995"/></svg>
<svg style="left:867px;top:454px" width="16" height="16" viewBox="0 0 16 16"><path d="M1.7,7.4 V13.2 Q1.7,14.4 2.9,14.4 H13.1 Q14.3,14.4 14.3,13.2 V7.4 L8,10.6 Z" fill="none" stroke="#009995" stroke-width="1.3" stroke-linejoin="round"/><path d="M3.7,8 V2.6 Q3.7,1.6 4.7,1.6 H11.3 Q12.3,1.6 12.3,2.6 V8" fill="none" stroke="#009995" stroke-width="1.3"/><path d="M5.8,4.2 H8.4 M5.8,6.2 H10.2" stroke="#009995" stroke-width="1.2"/></svg>
<svg style="left:900px;top:455px" width="14" height="14" viewBox="0 0 14 14"><path d="M7,1.1 C3.6,1.1 1,3.4 1,6.4 C1,9.4 3.6,11.6 7,11.6 L7.6,11.6 L8.4,13.2 L9.6,11.2 C11.6,10.4 13,8.6 13,6.4 C13,3.4 10.4,1.1 7,1.1 Z" fill="none" stroke="#009995" stroke-width="1.45" stroke-linejoin="round"/><circle cx="4.5" cy="6.4" r="0.8" fill="#009995"/><circle cx="7" cy="6.4" r="0.8" fill="#009995"/><circle cx="9.5" cy="6.4" r="0.8" fill="#009995"/></svg>
<svg style="left:932px;top:460px" width="14" height="4" viewBox="0 0 14 4"><circle cx="1.6" cy="2" r="1.3" fill="#009995"/><circle cx="7" cy="2" r="1.3" fill="#009995"/><circle cx="12.4" cy="2" r="1.3" fill="#009995"/></svg>
<svg style="left:867px;top:526px" width="16" height="16" viewBox="0 0 16 16"><path d="M1.7,7.4 V13.2 Q1.7,14.4 2.9,14.4 H13.1 Q14.3,14.4 14.3,13.2 V7.4 L8,10.6 Z" fill="none" stroke="#009995" stroke-width="1.3" stroke-linejoin="round"/><path d="M3.7,8 V2.6 Q3.7,1.6 4.7,1.6 H11.3 Q12.3,1.6 12.3,2.6 V8" fill="none" stroke="#009995" stroke-width="1.3"/><path d="M5.8,4.2 H8.4 M5.8,6.2 H10.2" stroke="#009995" stroke-width="1.2"/></svg>
<svg style="left:900px;top:527px" width="14" height="14" viewBox="0 0 14 14"><path d="M7,1.1 C3.6,1.1 1,3.4 1,6.4 C1,9.4 3.6,11.6 7,11.6 L7.6,11.6 L8.4,13.2 L9.6,11.2 C11.6,10.4 13,8.6 13,6.4 C13,3.4 10.4,1.1 7,1.1 Z" fill="none" stroke="#009995" stroke-width="1.45" stroke-linejoin="round"/><circle cx="4.5" cy="6.4" r="0.8" fill="#009995"/><circle cx="7" cy="6.4" r="0.8" fill="#009995"/><circle cx="9.5" cy="6.4" r="0.8" fill="#009995"/></svg>
<svg style="left:932px;top:532px" width="14" height="4" viewBox="0 0 14 4"><circle cx="1.6" cy="2" r="1.3" fill="#009995"/><circle cx="7" cy="2" r="1.3" fill="#009995"/><circle cx="12.4" cy="2" r="1.3" fill="#009995"/></svg>
</div>
<div class="a" style="left:334px;top:392px;width:990px;height:592px;border:1px solid #cdcdcd;border-radius:8px"></div>
<span class="t" style="left:886.70px;top:1012px;font-size:13px;color:#1c1c1e;line-height:15px;transform:scaleX(0.9839);transform-origin:0 0;">1 - 50 of 500</span>
<div class="pg" style="left:975px"></div>
<div class="pg" style="left:1007px;background:#fff;border:1px solid #009995"></div>
<span class="t" style="left:1016.40px;top:1012px;font-size:13px;color:#1c1c1e;line-height:15px;">1</span>
<div class="pg" style="left:1039px"></div>
<span class="t" style="left:1047.60px;top:1012px;font-size:13px;color:#3a3a3a;line-height:15px;">2</span>
<div class="pg" style="left:1071px"></div>
<span class="t" style="left:1079.60px;top:1012px;font-size:13px;color:#3a3a3a;line-height:15px;">3</span>
<div class="pg" style="left:1103px"></div>
<span class="t" style="left:1111.60px;top:1012px;font-size:13px;color:#3a3a3a;line-height:15px;">4</span>
<div class="pg" style="left:1135px"></div>
<span class="t" style="left:1143.60px;top:1012px;font-size:13px;color:#3a3a3a;line-height:15px;">5</span>
<div class="pg" style="left:1167px"></div>
<span class="t" style="left:1175.60px;top:1012px;font-size:13px;color:#3a3a3a;line-height:15px;">6</span>
<div class="pg" style="left:1199px"></div>
<svg style="left:983px;top:1014.5px" width="8" height="11" viewBox="0 0 8 11"><path d="M6,1 L1.6,5.5 L6,10" fill="none" stroke="#4a4a4a" stroke-width="1.15" stroke-linecap="round" stroke-linejoin="round"/></svg>
<svg style="left:1208px;top:1014.5px" width="8" height="11" viewBox="0 0 8 11"><path d="M2,1 L6.4,5.5 L2,10" fill="none" stroke="#4a4a4a" stroke-width="1.15" stroke-linecap="round" stroke-linejoin="round"/></svg>
<div class="pg" style="left:1239px;width:85px"></div>
<span class="t" style="left:1246.31px;top:1012px;font-size:14.5px;color:#2a2a2a;line-height:16px;transform:scaleX(0.9932);transform-origin:0 0;">10/page</span>
<svg style="left:1306px;top:1017px" width="10" height="7" viewBox="0 0 10 7"><path d="M0.8,1 L5,5.2 L9.2,1" fill="none" stroke="#444" stroke-width="1.3" stroke-linecap="round" stroke-linejoin="round"/></svg>
<div class="a" style="left:1201px;top:272px;width:232px;height:70px;border-radius:8px;background:#4a4a4a;box-shadow:0 2px 7px rgba(0,0,0,0.10)"></div>
<svg style="left:1311px;top:341.5px" width="12" height="6" viewBox="0 0 12 6"><path d="M0.5,0 L6,4.8 L11.5,0 Z" fill="#4a4a4a"/></svg>
<span class="t" style="left:1213.40px;top:282px;font-size:12.5px;color:#f2f2f2;line-height:14px;transform:scaleX(1.0077);transform-origin:0 0;">The limits will be updated at 00:00</span>
<span class="t" style="left:1213.40px;top:300px;font-size:12.5px;color:#f2f2f2;line-height:14px;transform:scaleX(0.9786);transform-origin:0 0;">am. on next Sunday, April 14th.</span>
<span class="t" style="left:1213.40px;top:318px;font-size:12.5px;color:#3ec6c4;line-height:14px;transform:scaleX(0.9704);transform-origin:0 0;">Check rules</span>
<svg style="left:0;top:0;filter:drop-shadow(1px 2px 2px rgba(0,0,0,0.3))" width="1440" height="1080" viewBox="0 0 1440 1080"><path d="M1306.5,377 L1342,393.5 L1332.6,397.6 L1414.6,512.4 L1412.6,514.2 L1321.4,407.5 L1314.8,415.5 Z" fill="#ff2d6c"/></svg>
</div>
</body>
</html>
